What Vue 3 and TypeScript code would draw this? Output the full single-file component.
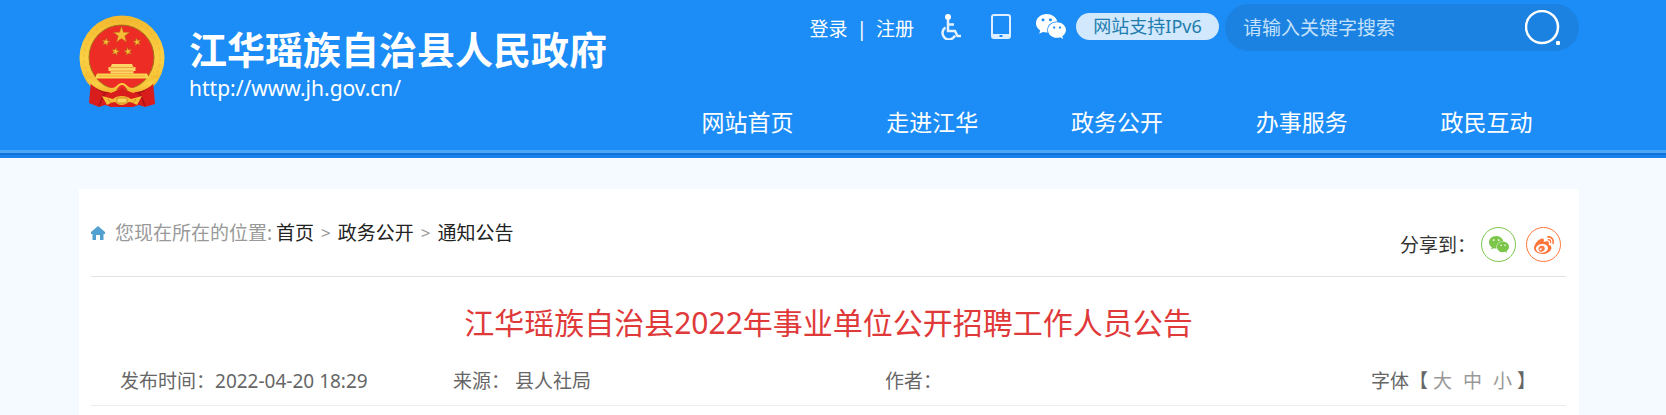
<script setup lang="ts">
import { ref } from 'vue'

const navItems: string[] = ['网站首页', '走进江华', '政务公开', '办事服务', '政民互动']
const crumbs: string[] = ['首页', '政务公开', '通知公告']
const fontSizes: string[] = ['大', '中', '小']
const keyword = ref('')

const wechatPath =
  'M385.2 167.6c6.4 0 12.6.3 18.8 1.1C387.4 90.3 303.3 32 207.7 32 100.5 32 13 104.8 13 197.4c0 53.4 29.3 97.5 77.9 131.6l-19.3 58.6 68-34.1c24.4 4.8 43.8 9.7 68.2 9.7 6.2 0 12.1-.3 18.3-.8-4-12.9-6.2-26.6-6.2-40.8-.1-84.9 72.9-154 165.3-154zm-104.5-52.9c14.5 0 24.2 9.7 24.2 24.4 0 14.5-9.7 24.2-24.2 24.2-14.8 0-29.3-9.7-29.3-24.2.1-14.7 14.6-24.4 29.3-24.4zm-136.4 48.6c-14.5 0-29.3-9.7-29.3-24.2 0-14.8 14.8-24.4 29.3-24.4 14.8 0 24.4 9.7 24.4 24.4 0 14.6-9.6 24.2-24.4 24.2zM563 319.4c0-77.9-77.9-141.3-165.4-141.3-92.7 0-165.4 63.4-165.4 141.3S305 460.7 397.6 460.7c19.3 0 38.9-5.1 58.6-9.9l53.4 29.3-14.8-48.6C534 402.1 563 363.2 563 319.4zm-219.1-24.5c-9.7 0-19.3-9.7-19.3-19.6 0-9.7 9.7-19.3 19.3-19.3 14.8 0 24.4 9.7 24.4 19.3 0 10-9.7 19.6-24.4 19.6zm107.1 0c-9.7 0-19.3-9.7-19.3-19.6 0-9.7 9.7-19.3 19.3-19.3 14.5 0 24.4 9.7 24.4 19.3.1 10-9.9 19.6-24.4 19.6z'
const weiboPath =
  'M407 177.6c7.6-24-13.4-46.8-37.4-41.7-22 4.8-28.8-28.1-7.1-32.8 50.1-10.9 92.3 37.1 76.5 84.8-6.8 21.2-38.8 10.8-32-10.3zM214.8 446.7C108.5 446.7 0 395.3 0 310.4c0-44.3 28-95.4 76.3-143.7C176 67 279.5 65.8 249.9 161c-4 13.1 12.3 5.7 12.3 6 79.5-33.6 140.5-16.8 114 51.4-3.7 9.4 1.1 10.9 8.3 13.1 135.7 42.3 34.8 215.2-169.7 215.2zm143.7-146.3c-5.4-55.7-78.5-94-163.4-85.7-84.8 8.6-148.8 60.3-143.4 116s78.5 94 163.4 85.7c84.8-8.6 148.8-60.3 143.4-116zM347.9 35.1c-25.9 5.6-16.8 43.7 8.3 38.3 72.3-15.2 134.8 52.8 111.7 124-7.4 24.2 29.1 37 37.4 12 31.9-99.8-55.1-195.9-157.4-174.3zm-78.5 311c-17.1 38.8-66.8 60-109.1 46.3-40.8-13.1-58-53.4-40.3-89.7 17.7-35.4 63.1-55.4 103.4-45.1 42 10.8 63.1 50.2 46 88.5zm-86.3-30c-12.9-5.4-30 .3-38 12.9-8.3 12.9-4.3 28 8.6 34 13.1 6 30.8.3 39.1-12.9 8-13.1 3.7-28.3-9.7-34zm32.6-13.4c-5.1-1.7-11.4.6-14.3 5.4-2.9 5.1-1.4 10.6 3.7 12.9 5.1 2 11.7-.3 14.6-5.4 2.8-5.2 1.1-10.9-4-12.9z'

// Five-pointed star outline as an SVG points list
function star(cx: number, cy: number, r: number, turn = 0): string {
  return Array.from({ length: 10 }, (_, i) => {
    const radius = i % 2 === 0 ? r : r * 0.4
    const angle = ((i * 36 - 90 + turn) * Math.PI) / 180
    return `${(cx + radius * Math.cos(angle)).toFixed(2)},${(cy + radius * Math.sin(angle)).toFixed(2)}`
  }).join(' ')
}
</script>

<template>
  <div class="page">
    <header class="header">
      <div class="container header-row">
        <a href="#" class="brand">
          <svg class="emblem" viewBox="0 0 86 92" aria-hidden="true">
            <defs>
              <linearGradient id="gold" x1="0" y1="0" x2="0" y2="1">
                <stop offset="0" stop-color="#f3b92f" />
                <stop offset="0.5" stop-color="#fbd044" />
                <stop offset="1" stop-color="#f2b52c" />
              </linearGradient>
            </defs>
            <circle cx="43" cy="43" r="42.5" fill="url(#gold)" />
            <circle cx="43" cy="43" r="38" fill="none" stroke="#e9ad2a" stroke-width="2" stroke-dasharray="3 3" opacity="0.3" />
            <circle cx="42.5" cy="42.5" r="32.5" fill="#ed2c25" stroke="#a3711b" stroke-width="1" />
            <g fill="#f7bd35" stroke="#b5651a" stroke-width="0.5">
              <polygon :points="star(42.5, 20, 8.5)" />
              <polygon :points="star(27, 27, 4.2, 12)" />
              <polygon :points="star(58, 27, 4.2, -12)" />
              <polygon :points="star(36.5, 36.5, 4.2, 12)" />
              <polygon :points="star(49, 36.5, 4.2, -12)" />
            </g>
            <path d="M33 49h20l1.500 3h2v4h-2v2.500H31.500V56h-2v-4h2z" fill="#fcd765" />
            <path d="M31 52.500h24M32 56h22" stroke="#e88a2b" stroke-width="0.700" />
            <path d="M18 58.500h50l2 5H16z" fill="#fbd551" />
            <path d="M20 61h46" stroke="#f0a22f" stroke-width="0.700" />
            <path d="M12 66l8 7 12 5 11-5 11 5 12-5 8-7 2 23-10 3-6-2-6 2H32l-6-2-6 2-10-4z" fill="#d91d1c" />
            <path d="M12 66c3 6 8 10 15 12-4 2-4 6-7 13M74 66c-3 6-8 10-15 12 4 2 4 6 7 13" fill="none" stroke="#a8131a" stroke-width="1.500" />
            <path d="M5 60c8 13 18 18 28 17 5 0 6-7 10-7s5 7 10 7c10 1 20-4 28-17l-8 1c-7 8-13 12-20 12-4 0-6-5-10-5s-6 5-10 5c-7 0-13-4-20-12z" fill="url(#gold)" />
            <path d="M23 81l11 3c4-4 13-4 18 0l11-3-5 9c-4-2-6-3-8-3-5 4-10 4-14 0-2 0-5 1-8 3z" fill="#f4bd37" />
            <path d="M38 83h10v5H38zM29 84l3 4M57 84l-3 4" fill="#fbd65a" stroke="#c98220" stroke-width="0.800" />
          </svg>
          <span class="brand-text">
            <span class="brand-name">江华瑶族自治县人民政府</span>
            <span class="brand-url">http://www.jh.gov.cn/</span>
          </span>
        </a>

        <div class="header-right">
          <div class="tools">
            <div class="account">
              <a href="#">登录</a>
              <span class="divider">|</span>
              <a href="#">注册</a>
            </div>
            <div class="quick">
              <a href="#" class="barrier-free" aria-label="无障碍浏览">
                <svg width="20" height="26" viewBox="0 0 20 26" fill="none" stroke="#e6f3ff" stroke-width="2.500">
                  <circle cx="7" cy="3" r="3" fill="#fff" stroke="none" />
                  <path d="M7 6v11h7l2.500 5H20M7.500 10.500H13M4.500 13.500a6.500 6.500 0 1 0 9.500 8" />
                </svg>
              </a>
              <a href="#" aria-label="移动版">
                <svg width="20" height="25" viewBox="0 0 20 25">
                  <path fill="#dceeff" fill-rule="evenodd" d="M3 0h14q3 0 3 3v19q0 3-3 3H3q-3 0-3-3V3q0-3 3-3zm0 2q-1 0-1 1v17h16V3q0-1-1-1zM8.500 21v2h3v-2z" />
                </svg>
              </a>
              <a href="#" aria-label="微信">
                <svg width="30" height="25" viewBox="13 32 550 449" preserveAspectRatio="none"><path fill="#fff" :d="wechatPath" /></svg>
              </a>
            </div>
            <a href="#" class="ipv6">网站支持IPv6</a>
            <form class="search" @submit.prevent>
              <input v-model="keyword" type="text" placeholder="请输入关键字搜索" aria-label="请输入关键字搜索" />
              <button type="submit" aria-label="搜索">
                <svg width="36" height="36" viewBox="0 0 36 36">
                  <circle cx="17" cy="17" r="16" fill="none" stroke="#fff" stroke-width="2.500" />
                  <rect x="31" y="31" width="4" height="4" rx="1" fill="#fff" />
                </svg>
              </button>
            </form>
          </div>
          <nav class="nav">
            <a v-for="item in navItems" :key="item" href="#">{{ item }}</a>
          </nav>
        </div>
      </div>
      <div class="header-edge"></div>
    </header>

    <main class="main">
      <article class="container card">
        <div class="location">
          <div class="crumbs">
            <svg class="home" width="14" height="14" viewBox="0 0 14 14"><path fill="#529fd2" d="M7 0l7 6v2h-1.500v6H9V9H5v5H1.500V8H0V6z" /></svg>
            <span class="crumbs-label">您现在所在的位置:</span>
            <template v-for="(crumb, i) in crumbs" :key="crumb">
              <span v-if="i > 0" class="sep">&gt;</span>
              <a href="#">{{ crumb }}</a>
            </template>
          </div>
          <div class="share">
            <span>分享到：</span>
            <div class="share-list">
              <button type="button" class="share-btn wechat" aria-label="分享到微信">
                <svg width="20" height="17" viewBox="13 32 550 449" preserveAspectRatio="none"><path fill="currentColor" :d="wechatPath" /></svg>
              </button>
              <button type="button" class="share-btn weibo" aria-label="分享到微博">
                <svg width="20" height="18" viewBox="0 32 512 415" preserveAspectRatio="none"><path fill="currentColor" :d="weiboPath" /></svg>
              </button>
            </div>
          </div>
        </div>

        <h1 class="title">江华瑶族自治县2022年事业单位公开招聘工作人员公告</h1>

        <div class="meta">
          <span>发布时间：<time datetime="2022-04-20T18:29">2022-04-20 18:29</time></span>
          <span class="source"><span>来源：</span><span>县人社局</span></span>
          <span>作者：</span>
          <span class="sizes">
            <span>字体【</span>
            <span class="size-list">
              <button v-for="size in fontSizes" :key="size" type="button">{{ size }}</button>
            </span>
            <span>】</span>
          </span>
        </div>
      </article>
    </main>
  </div>
</template>

<style>
body {
  margin: 0;
  background: #f4faff;
}
</style>

<style scoped>
.page {
  font-family: "Noto Sans", "Noto Sans CJK SC", sans-serif;
  font-size: 19px;
  line-height: 28px;
  color: #333;
}

a {
  color: inherit;
  text-decoration: none;
}

button,
input {
  margin: 0;
  padding: 0;
  border: 0;
  background: none;
  font: inherit;
  color: inherit;
}

button {
  cursor: pointer;
}

svg {
  display: block;
}

.container {
  box-sizing: border-box;
  width: 100%;
  max-width: 1500px;
  margin: 0 auto;
}

.header {
  background: #1c8df6;
  color: #fff;
}

.header,
.main {
  padding-right: 8px;
}

.header-row {
  display: flex;
  justify-content: space-between;
  height: 150px;
}

.header-edge {
  height: 8px;
  margin-right: -8px;
  background: linear-gradient(#4da5f8 3px, #0c71d9 3px 5px, #1781ea 5px);
}

.brand {
  display: flex;
  gap: 24px;
  padding-top: 15px;
}

.emblem {
  width: 86px;
  height: 92px;
}

.brand-text {
  display: flex;
  flex-direction: column;
  padding-top: 11px;
  white-space: nowrap;
}

.brand-name {
  font-size: 38px;
  line-height: 46px;
  font-weight: 700;
}

.brand-url {
  font-size: 21px;
  line-height: 32px;
}

.header-right {
  display: flex;
  flex-direction: column;
  width: 924px;
}

.tools {
  display: flex;
  justify-content: flex-end;
  padding-top: 4px;
}

.account {
  display: flex;
  gap: 9px;
  padding-top: 11px;
}

.quick {
  display: flex;
  gap: 25px;
  padding: 10px 10px 0 27px;
}

.barrier-free {
  margin-right: 5px;
}

.ipv6 {
  box-sizing: border-box;
  width: 143px;
  height: 27px;
  margin: 9px 6px 0 0;
  border-radius: 14px;
  background: #d2e8fd;
  color: #217cae;
  font-size: 18px;
  line-height: 27px;
  text-align: center;
}

.search {
  display: flex;
  align-items: center;
  box-sizing: border-box;
  width: 354px;
  height: 47px;
  padding: 0 18px;
  border-radius: 24px;
  background: #1b82e1;
}

.search input {
  flex: 1;
  min-width: 0;
  outline: 0;
}

.search input::placeholder {
  color: #c3e1fc;
  opacity: 1;
}

.nav {
  display: flex;
  padding-top: 55px;
  font-size: 23px;
  line-height: 32px;
}

.nav a {
  flex: 1;
  text-align: center;
}

.main {
  padding-top: 31px;
}

.card {
  padding: 0 13px 20px 12px;
  background: #fff;
}

.location {
  display: flex;
  justify-content: space-between;
  box-sizing: border-box;
  height: 88px;
  border-bottom: 1px solid #e2e2e2;
}

.crumbs {
  display: flex;
  align-items: center;
  height: 28px;
  padding-top: 30px;
  color: #999;
}

.crumbs a {
  color: #222;
}

.home {
  margin-right: 10px;
}

.crumbs-label {
  margin-right: 4px;
}

.sep {
  margin: 0 7px;
  font-size: 17px;
}

.share {
  display: flex;
  align-items: center;
  gap: 5px;
  height: 35px;
  padding: 38px 5px 0 0;
}

.share-list {
  display: flex;
  gap: 10px;
}

.share-btn {
  display: flex;
  align-items: center;
  justify-content: center;
  box-sizing: border-box;
  width: 35px;
  height: 35px;
  border: 1px solid currentColor;
  border-radius: 50%;
}

.wechat {
  color: #7bc549;
}

.weibo {
  color: #ff763b;
}

.title {
  margin: 0;
  padding: 24px 0 22px;
  font-size: 30px;
  line-height: 44px;
  font-weight: 400;
  color: #e0393a;
  text-align: center;
}

.meta {
  display: grid;
  grid-template-columns: 333fr 432fr 486fr auto;
  padding: 0 30px 10px 29px;
  border-bottom: 1px solid #ececec;
  color: #666;
}

.source {
  display: flex;
  gap: 5px;
}

.sizes {
  display: flex;
}

.size-list {
  display: flex;
  gap: 11px;
  padding: 0 5px;
  color: #999;
}
</style>
